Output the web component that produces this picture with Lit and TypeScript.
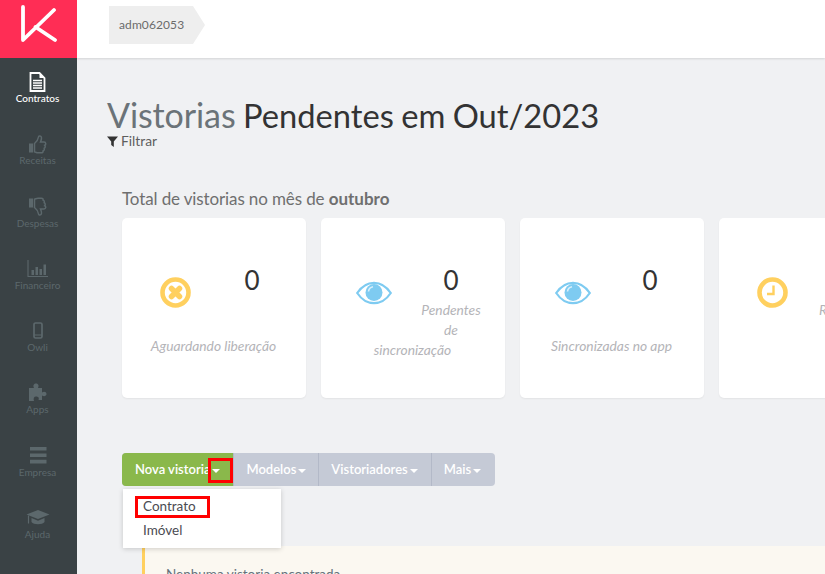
import { LitElement, html, css, svg } from "lit";
import { customElement } from "lit/decorators.js";

const eye = html`<svg class="ic eye" width="36" height="24" viewBox="0 0 36 24"><path d="M1.200 12C5.500 5.600 11.300 1.800 18 1.800S30.500 5.600 34.800 12C30.500 18.400 24.700 22.200 18 22.200S5.500 18.400 1.200 12Z" fill="none" stroke="#7ecbf1" stroke-width="2.200"/><circle cx="18" cy="11.500" r="8.500" fill="#7ecbf1"/><path d="M12.500 10.500A5.500 5.500 0 0 1 17 5.800" fill="none" stroke="#d8f0fb" stroke-width="1.600"/></svg>`;
const xc = html`<svg class="ic" width="31" height="31" viewBox="0 0 31 31"><circle cx="15.500" cy="15.500" r="13" fill="none" stroke="#ffd05f" stroke-width="4.600"/><path d="M11.500 11.500L19.500 19.500M19.500 11.500L11.500 19.500" stroke="#ffd05f" stroke-width="5.500" stroke-linecap="round"/></svg>`;
const clock = html`<svg class="ic" width="31" height="31" viewBox="0 0 31 31"><circle cx="15.500" cy="15.500" r="13" fill="none" stroke="#ffd05f" stroke-width="4.600"/><path d="M16.500 8.500V17H10" fill="none" stroke="#ffd05f" stroke-width="2.400"/></svg>`;

const navIcons: Record<string, unknown> = {
  doc: svg`<path d="M2.500 1h9l5 5v13h-14z" fill="none" stroke="currentColor" stroke-width="1.800"/><path d="M11.500 1v5h5z" fill="currentColor"/><path d="M5 8.500h9M5 11h9M5 13.500h9M5 16h9" stroke="currentColor" stroke-width="1.400"/>`,
  up: svg`<path d="M1 9.500h4v9H1z" fill="currentColor"/><path d="M6.500 9.500c2-1.500 3.500-3.500 4-6.500.2-1.500 2.800-1.500 3 .8.100 1.700-.5 3-1 4.200h3.500c2.200 0 2.200 2.800.7 3.300.9 1 .6 2.500-.5 3 .4 1.200-.1 2.300-1.100 2.600.2 1.300-.7 1.900-1.700 1.900H10c-1.500 0-2.300-.7-3.500-1z" fill="none" stroke="currentColor" stroke-width="1.500"/>`,
  down: svg`<path d="M1 1.500h4v9H1z" fill="currentColor"/><path d="M6.500 10.500c2 1.500 3.500 3.500 4 6.500.2 1.500 2.800 1.500 3-.8.100-1.700-.5-3-1-4.200h3.500c2.200 0 2.200-2.800.7-3.300.9-1 .6-2.500-.5-3 .4-1.200-.1-2.300-1.100-2.600.2-1.300-.7-1.900-1.700-1.900H10c-1.500 0-2.300.7-3.500 1z" fill="none" stroke="currentColor" stroke-width="1.500"/>`,
  chart: svg`<path d="M1 1v16.500h20" fill="none" stroke="currentColor" stroke-width="1.100"/><path d="M4.500 11h2.500v5H4.500zM8.500 8h2.500v8H8.500zM12.500 10h2.500v6h-2.500zM16.500 5.500H19V16h-2.500z" fill="currentColor"/>`,
  phone: svg`<rect x="6" y="2" width="8" height="15" rx="1.500" fill="none" stroke="currentColor" stroke-width="1.700"/><path d="M6 14h8" stroke="currentColor" stroke-width="1"/>`,
  puzzle: svg`<path d="M1 5h5c-1.500-3 .2-4.500 2-4.500s3.500 1.500 2 4.500h4v4.500c2-1.500 4.500-.5 4.500 1.500s-2.500 3-4.500 1.500v4.500h-3.500c1-2.500-.5-3.500-2.500-3.500S5 15.500 6 18H1z" fill="currentColor"/>`,
  bars: svg`<path d="M2 1h16.500v3.600H2zM2 7.400h16.500V11H2zM2 13.800h16.500v3.600H2z" fill="currentColor"/>`,
  cap: svg`<path d="M12 2 .5 6.500 12 11l11.500-4.500z" fill="currentColor"/><path d="M5.500 10v4c2 3 11 3 13 0v-4L12 12.700z" fill="currentColor"/><path d="M2.500 7.500v8" stroke="currentColor" stroke-width="1.200"/>`,
};

const nav = [
  { label: "Contratos", icon: "doc", w: 19, h: 20, on: true },
  { label: "Receitas", icon: "up", w: 20, h: 20 },
  { label: "Despesas", icon: "down", w: 20, h: 20 },
  { label: "Financeiro", icon: "chart", w: 22, h: 20 },
  { label: "Owli", icon: "phone", w: 20, h: 20 },
  { label: "Apps", icon: "puzzle", w: 20, h: 20 },
  { label: "Empresa", icon: "bars", w: 20, h: 20 },
  { label: "Ajuda", icon: "cap", w: 24, h: 20 },
];

const cards = [
  { icon: xc, n: "0", top: "", bottom: "Aguardando liberação" },
  { icon: eye, n: "0", top: "Pendentes<br>de", bottom: "sincronização" },
  { icon: eye, n: "0", top: "", bottom: "Sincronizadas no app" },
  { icon: clock, n: "", top: "Realizadas<br>Aprovar", bottom: "" },
];

@customElement("app-root")
export class AppRoot extends LitElement {
  static styles = css`
    :host { display: block; width: 825px; height: 574px; overflow: hidden; font-family: Lato, "Liberation Sans", sans-serif; background: #f0f1f3; }
    .shell { display: grid; grid-template-columns: 77px 1fr; height: 574px; }
    .side { background: #3a4245; display: flex; flex-direction: column; }
    .logo { height: 58px; box-sizing: border-box; padding-bottom: 12px; background: #ff2d55; display: flex; align-items: center; justify-content: center; flex: none; }
    .nav { display: flex; flex-direction: column; padding: 14px 2px 0 0; }
    .item { height: 62.300px; display: flex; flex-direction: column; align-items: center; color: #5c686c; font-size: 10px; line-height: 12px; flex: none; }
    .item svg { display: block; }
    .item.on { color: #fff; font-weight: 500; }
    .main { min-width: 0; display: flex; flex-direction: column; overflow: hidden; }
    .top { height: 58px; flex: none; background: #fff; box-shadow: 0 1px 2px rgba(0,0,0,.12); display: flex; align-items: center; padding-left: 32px; position: relative; }
    .crumb { height: 38px; background: #eeeeee; color: #6b6b6b; font-size: 12px; letter-spacing: .1px; line-height: 38px; padding-left: 10px; width: 84px; box-sizing: border-box; position: relative; margin-top: -8px; }
    .crumb::after { content: ""; position: absolute; left: 84px; top: 0; border-left: 12px solid #eeeeee; border-top: 19px solid transparent; border-bottom: 19px solid transparent; }
    .content { padding: 39px 0 0 30px; min-width: 800px; }
    h1 { margin: 0; font-size: 32.700px; font-weight: 400; line-height: 35px; color: #333; white-space: nowrap; word-spacing: -1px; }
    h1 span { color: #6b7378; font-size: 34px; letter-spacing: -.1px; }
    .filter { font-size: 13.800px; line-height: 16px; color: #5e5e5e; display: flex; align-items: center; gap: 3px; }
    .total { margin: 39px 0 0 15px; font-size: 17px; letter-spacing: -.12px; line-height: 22px; font-weight: 400; color: #6f6f6f; }
    .total b { font-weight: 700; letter-spacing: 0; }
    .cards { display: flex; gap: 15px; margin: 8px 0 0 15px; }
    .card { width: 184px; height: 180px; flex: none; background: #fff; border-radius: 5px; box-shadow: 0 1px 2px rgba(0,0,0,.06); box-sizing: border-box; padding: 47px 15px 0; display: grid; grid-template-columns: 76px 76px; column-gap: 1px; grid-template-rows: 30px minmax(41px, auto); align-content: start; text-align: center; font-style: italic; font-size: 13.800px; line-height: 20px; color: #b4b4b8; }
    .card .ic { grid-column: 1; grid-row: 1 / span 2; justify-self: center; margin-top: 12px; }
    .card .ic.eye { margin-top: 16px; }
    .num { grid-column: 2; grid-row: 1; font-style: normal; font-size: 26px; line-height: 30px; color: #333; height: 30px; }
    .top-label { grid-column: 2; grid-row: 2; margin-top: 5px; white-space: nowrap; }
    .bottom { grid-column: 1 / span 2; grid-row: 3; white-space: nowrap; }
    .btns { display: flex; margin: 55px 0 0 15px; width: max-content; height: 33px; border-radius: 4px; background: #c5cad6; font-size: 13px; line-height: 33px; color: #fff; font-weight: 600; box-sizing: border-box; }
    .btn { padding: 0 12px; display: flex; align-items: center; box-sizing: border-box; border-left: 1px solid #b3b9c8; position: relative; }
    .btn:first-child { background: #8ab84b; border: 0; border-radius: 4px 0 0 4px; padding: 0 13px; }
    .btn.wide { padding-right: 13px; }
    .btn:last-child { padding-right: 14px; }
    .caret { width: 0; height: 0; border-left: 4px solid transparent; border-right: 4px solid transparent; border-top: 4px solid #fff; margin-left: 2px; margin-top: 2px; }
    .mark { position: absolute; left: 86px; top: 5px; width: 25px; height: 25px; border: 3px solid #f00; box-sizing: border-box; }
    .menu-wrap { position: relative; margin-left: 15px; height: 0; }
    .menu { position: absolute; left: 1px; top: 3px; width: 158px; height: 59px; background: #fff; box-shadow: 0 1px 5px rgba(0,0,0,.18); z-index: 2; font-size: 13.500px; color: #4b4b52; padding-top: 5px; box-sizing: border-box; }
    .menu div { line-height: 24px; padding-left: 20px; position: relative; }
    .menu .sel::before { content: ""; position: absolute; left: 12px; top: 2px; width: 75px; height: 22px; border: 3px solid #f00; box-sizing: border-box; }
    .alert { margin: 60px 0 0 35px; height: 60px; border-left: 3px solid #ffd05f; background: #fbf8f1; padding: 20px 0 0 21px; font-size: 13.500px; line-height: 16px; color: #65727c; margin-right: -10px; }
  `;

  render() {
    return html`<div class="shell">
      <aside class="side">
        <div class="logo">
          <svg width="36" height="40" viewBox="0 0 36 40"><path d="M2 4V37L33 7M14.500 24L34 37" fill="none" stroke="#fff" stroke-width="3.800" stroke-linecap="round" stroke-linejoin="round"/></svg>
        </div>
        <nav class="nav">
          ${nav.map(
            (n) => html`<div class="item ${n.on ? "on" : ""}">
              <svg width="${n.w}" height="${n.h}" viewBox="0 0 ${n.w} ${n.h}">${navIcons[n.icon]}</svg>
              <span>${n.label}</span>
            </div>`
          )}
        </nav>
      </aside>
      <section class="main">
        <header class="top"><div class="crumb">adm062053</div></header>
        <div class="content">
          <h1><span>Vistorias</span> Pendentes em Out/2023</h1>
          <div class="filter">
            <svg width="11" height="11" viewBox="0 0 11 11"><path d="M0 .5h11L6.800 5.500V11L4.200 9V5.500z" fill="#333"/></svg>
            Filtrar
          </div>
          <div class="total">Total de vistorias no mês de <b>outubro</b></div>
          <div class="cards">
            ${cards.map(
              (c) => html`<div class="card">
                ${c.icon}
                <div class="num">${c.n}</div>
                <div class="top-label" .innerHTML=${c.top}></div>
                <div class="bottom">${c.bottom}</div>
              </div>`
            )}
          </div>
          <div class="btns">
            <div class="btn">Nova vistoria<i class="caret"></i><i class="mark"></i></div>
            <div class="btn">Modelos<i class="caret"></i></div>
            <div class="btn wide">Vistoriadores<i class="caret"></i></div>
            <div class="btn">Mais<i class="caret"></i></div>
          </div>
          <div class="menu-wrap">
            <div class="menu"><div class="sel">Contrato</div><div>Imóvel</div></div>
          </div>
          <div class="alert">Nenhuma vistoria encontrada</div>
        </div>
      </section>
    </div>`;
  }
}
